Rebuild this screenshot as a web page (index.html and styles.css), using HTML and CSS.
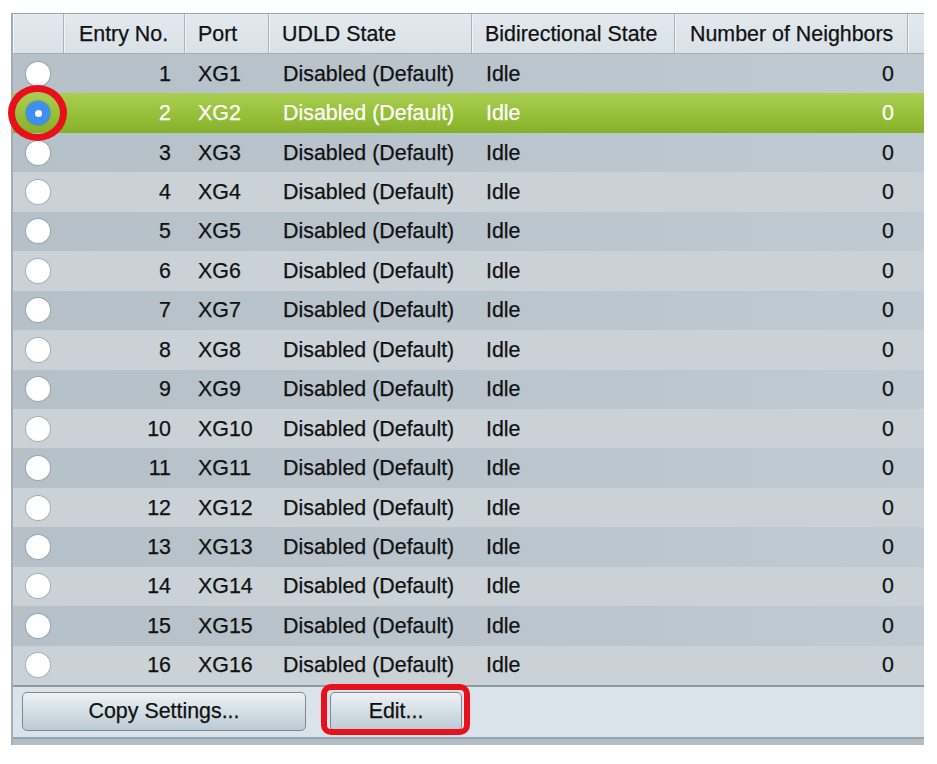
FILE: index.html
```html
<!DOCTYPE html>
<html>
<head>
<meta charset="utf-8">
<link rel="stylesheet" href="styles.css">
</head>
<body>
<div class="page">
  <div class="panel">
    <div class="row head">
      <div class="c c0"></div>
      <div class="c c1">Entry No.</div>
      <div class="c c2">Port</div>
      <div class="c c3">UDLD State</div>
      <div class="c c4">Bidirectional State</div>
      <div class="c c5">Number of Neighbors</div>
      <div class="c c6"></div>
    </div>
    <div id="rows"></div>
    <div class="footer">
      <button class="btn copy">Copy Settings...</button>
      <button class="btn edit">Edit...</button>
    </div>
  </div>
</div>
<script src="app.js"></script>
</body>
</html>
```
FILE: app.js
```js
var rows = document.getElementById('rows');
var html = '';
for (var i = 1; i <= 16; i++) {
  var cls = 'row data ' + (i === 2 ? 'sel' : (i % 2 ? 'odd' : 'even'));
  html += '<div class="' + cls + '">' +
    '<div class="c c0"><span class="radio' + (i === 2 ? ' on' : '') + '"></span>' + (i === 2 ? '<span class="ring"></span>' : '') + '</div>' +
    '<div class="c c1 num">' + i + '</div>' +
    '<div class="c c2">XG' + i + '</div>' +
    '<div class="c c3">Disabled (Default)</div>' +
    '<div class="c c4">Idle</div>' +
    '<div class="c c5 num">0</div>' +
    '<div class="c c6"></div>' +
    '</div>';
}
rows.innerHTML = html;
```
FILE: styles.css
```css
* { box-sizing: border-box; }
html, body { margin: 0; padding: 0; background: #fff; }
body {
  font-family: "Liberation Sans", Arial, Helvetica, sans-serif;
  font-size: 21.4px;
  color: #111;
  -webkit-text-stroke: 0.25px currentColor;
}
.page {
  padding: 13px 0 0 11px;
  width: 937px;
  height: 764px;
  overflow: hidden;
}
.panel {
  width: 913px;
  border-left: 2px solid #a3adb5;
  border-top: 1px solid #9aa5ad;
}
.row {
  display: grid;
  grid-template-columns: 51px 121px 84px 203px 203px 233px 16px;
  align-items: stretch;
}
.c {
  display: flex;
  align-items: center;
  white-space: nowrap;
  position: relative;
}
.head {
  height: 40px;
  background: linear-gradient(#e3e9ee, #d9e1e7);
  border-bottom: 1px solid #a4aeb6;
}
.head .c {
  border-right: 1px solid #aab4bc;
  box-shadow: inset 1px 0 0 #f2f5f7;
  padding-left: 15px;
  padding-top: 2px;
}
.head .c0 { padding-left: 0; }
.head .c6 { border-right: none; }
.head .c2 { padding-left: 13px; }
.head .c3 { padding-left: 13px; }
.head .c4 { padding-left: 13px; }
.data { height: 39.44px; }
.data .c { padding-left: 14px; padding-top: 1px; }
.data .c2 { padding-left: 13px; }
.data .num { justify-content: flex-end; padding-left: 0; padding-right: 14px; }
.data .c0 { justify-content: center; padding-left: 0; padding-top: 0; }
.odd { background: linear-gradient(90deg, #b5c0c9, #bac5ce 60%, #bfcad2); }
.even { background: #cad2d8; }
.sel {
  background: linear-gradient(#a9ce50, #96bf3a 55%, #86b02a);
  color: #fff;
}
.radio {
  width: 24px;
  height: 24px;
  border-radius: 50%;
  background: radial-gradient(circle at 50% 40%, #ffffff 60%, #f1f1f1);
  box-shadow: 0 0 0 1px rgba(120, 130, 140, 0.45);
  margin-left: -1px;
}
.radio.on {
  background: #3e8ff0;
  box-shadow: 0 0 0 1px rgba(40, 100, 180, 0.35);
  display: flex;
  align-items: center;
  justify-content: center;
}
.radio.on::after {
  content: "";
  width: 7px;
  height: 7px;
  border-radius: 50%;
  background: #fff;
}
.ring {
  position: absolute;
  left: 50%;
  top: 50%;
  width: 59px;
  height: 56px;
  margin-left: -31px;
  margin-top: -28px;
  border: 7px solid #e8111b;
  border-radius: 50%;
  z-index: 2;
}
.footer {
  height: 60px;
  background: #dbe3ea;
  border-top: 2px solid #8f9ba4;
  border-bottom: 6px solid #b3bdc5;
  box-shadow: inset 0 -2px 0 #97a3ac;
  display: flex;
  align-items: flex-start;
  padding: 5px 0 0 9px;
}
.btn {
  font-family: "Liberation Sans", Arial, Helvetica, sans-serif;
  font-size: 21.4px;
  color: #111;
  -webkit-text-stroke: 0.25px currentColor;
  height: 39px;
  border: 1px solid #7c8991;
  border-radius: 5px;
  background: linear-gradient(#eef2f5, #d6e0e7 45%, #bccbd6);
  padding: 0;
  position: relative;
}
.copy { width: 284px; }
.edit { width: 132px; margin-left: 24px; }
.edit::after {
  content: "";
  position: absolute;
  left: -10px;
  right: -9px;
  top: -9px;
  bottom: -5px;
  border: 6px solid #e8111b;
  border-radius: 10px;
}
```
